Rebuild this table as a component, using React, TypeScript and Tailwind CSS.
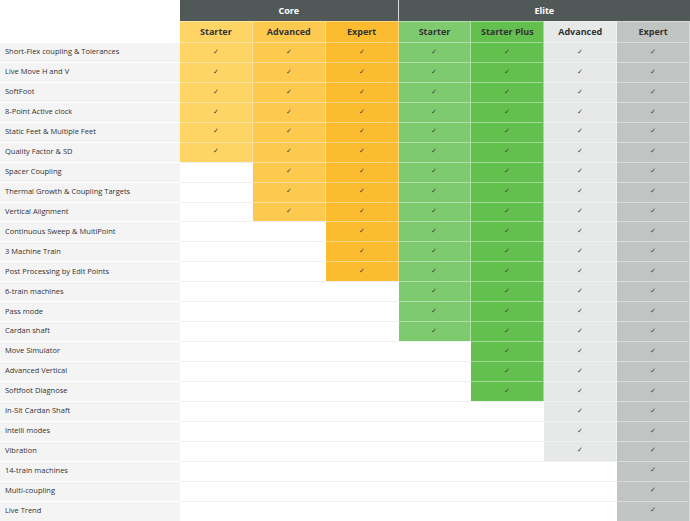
import React from 'react';

const features: [string, number][] = [
  ['Short-Flex coupling & Tolerances', 1],
  ['Live Move H and V', 1],
  ['SoftFoot', 1],
  ['8-Point Active clock', 1],
  ['Static Feet & Multiple Feet', 1],
  ['Quality Factor & SD', 1],
  ['Spacer Coupling', 2],
  ['Thermal Growth & Coupling Targets', 2],
  ['Vertical Alignment', 2],
  ['Continuous Sweep & MultiPoint', 3],
  ['3 Machine Train', 3],
  ['Post Processing by Edit Points', 3],
  ['6-train machines', 4],
  ['Pass mode', 4],
  ['Cardan shaft', 4],
  ['Move Simulator', 5],
  ['Advanced Vertical', 5],
  ['Softfoot Diagnose', 5],
  ['In-Sit Cardan Shaft', 6],
  ['Intelli modes', 6],
  ['Vibration', 6],
  ['14-train machines', 7],
  ['Multi-coupling', 7],
  ['Live Trend', 7],
];

const plans = [
  { name: 'Starter', bg: 'bg-[#fed565]' },
  { name: 'Advanced', bg: 'bg-[#fdca4f]' },
  { name: 'Expert', bg: 'bg-[#fcbc2f]' },
  { name: 'Starter', bg: 'bg-[#7dca6f]' },
  { name: 'Starter Plus', bg: 'bg-[#63bf4e]' },
  { name: 'Advanced', bg: 'bg-[#e6e9e7]' },
  { name: 'Expert', bg: 'bg-[#c0c4c2]' },
];

export default function App() {
  return (
    <div className="w-[690px] h-[521px] overflow-hidden bg-white text-[#333] font-['Open_Sans',sans-serif]">
      <div className="grid grid-cols-[180px_repeat(7,minmax(0,1fr))]">
        {/* group headers */}
        <div className="h-[21px] bg-white" />
        <div className="col-span-3 h-[21px] bg-[#505858] border-r border-[#d9dcdb] flex items-center justify-center text-white text-[9px] font-bold">
          Core
        </div>
        <div className="col-span-4 h-[21px] bg-[#505858] flex items-center justify-center text-white text-[9px] font-bold">
          Elite
        </div>

        {/* plan headers */}
        <div className="h-[21px] bg-white" />
        {plans.map((p, i) => (
          <div
            key={i}
            className={`h-[21px] ${p.bg} border-t border-r border-white/40 flex items-center justify-center text-[9px] font-bold text-[#333]`}
          >
            {p.name}
          </div>
        ))}

        {/* rows */}
        {features.map(([label, from]) => (
          <React.Fragment key={label}>
            <div className="h-[19.95px] bg-[#f4f4f4] border-t border-white flex items-center pl-[5px] pb-px text-[7.5px] text-[#333]">
              {label}
            </div>
            {plans.map((p, i) =>
              i + 1 >= from ? (
                <div
                  key={i}
                  className={`h-[19.95px] ${p.bg} border-t border-r border-white/40 flex items-center justify-center pb-px text-[7px] text-[#444]`}
                >
                  ✓
                </div>
              ) : (
                <div key={i} className="h-[19.95px] bg-white border-t border-[#efefef]" />
              )
            )}
          </React.Fragment>
        ))}
      </div>
    </div>
  );
}
